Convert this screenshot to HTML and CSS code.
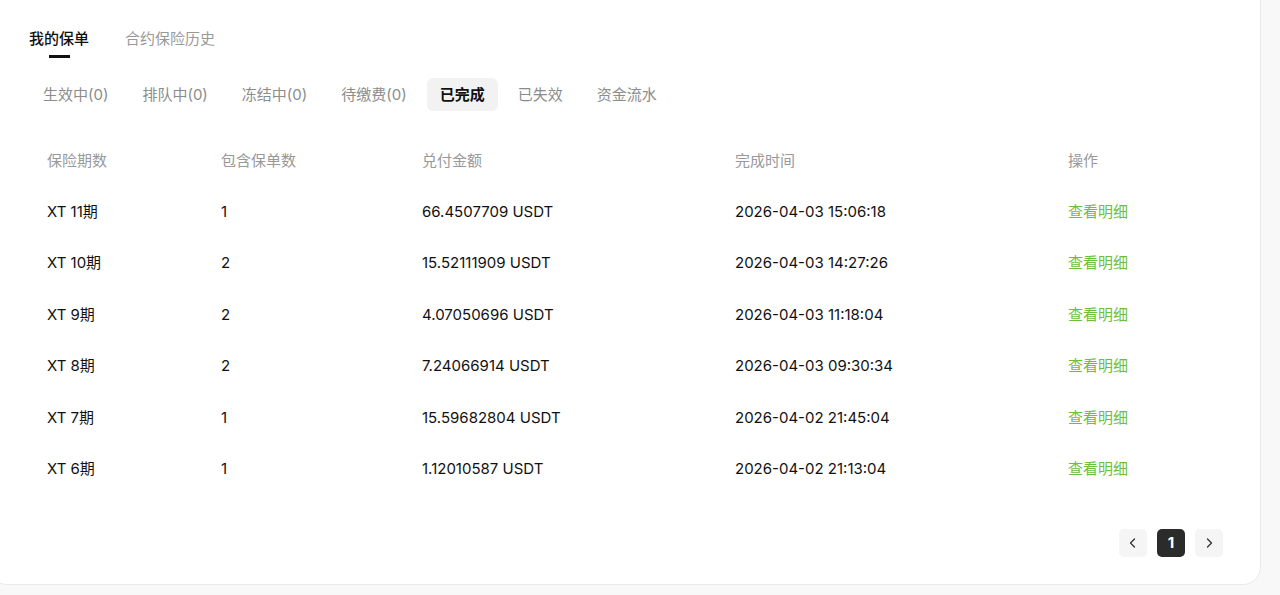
FILE: index.html
```html
<!DOCTYPE html>
<html lang="zh-CN">
<head>
    <meta charset="UTF-8">
    <title>我的保单</title>
    <link rel="stylesheet" href="styles.css">
</head>
<body>
    <div class="card">
        <div class="tabs">
            <div class="tab active">我的保单</div>
            <div class="tab">合约保险历史</div>
        </div>

        <div class="subtabs">
            <div class="subtab">生效中(0)</div>
            <div class="subtab">排队中(0)</div>
            <div class="subtab">冻结中(0)</div>
            <div class="subtab">待缴费(0)</div>
            <div class="subtab active">已完成</div>
            <div class="subtab">已失效</div>
            <div class="subtab">资金流水</div>
        </div>

        <div class="table">
            <div class="row head">
                <div>保险期数</div>
                <div>包含保单数</div>
                <div>兑付金额</div>
                <div>完成时间</div>
                <div>操作</div>
            </div>
            <div class="row">
                <div>XT 11期</div>
                <div>1</div>
                <div>66.4507709 USDT</div>
                <div>2026-04-03 15:06:18</div>
                <div><a class="link">查看明细</a></div>
            </div>
            <div class="row">
                <div>XT 10期</div>
                <div>2</div>
                <div>15.52111909 USDT</div>
                <div>2026-04-03 14:27:26</div>
                <div><a class="link">查看明细</a></div>
            </div>
            <div class="row">
                <div>XT 9期</div>
                <div>2</div>
                <div>4.07050696 USDT</div>
                <div>2026-04-03 11:18:04</div>
                <div><a class="link">查看明细</a></div>
            </div>
            <div class="row">
                <div>XT 8期</div>
                <div>2</div>
                <div>7.24066914 USDT</div>
                <div>2026-04-03 09:30:34</div>
                <div><a class="link">查看明细</a></div>
            </div>
            <div class="row">
                <div>XT 7期</div>
                <div>1</div>
                <div>15.59682804 USDT</div>
                <div>2026-04-02 21:45:04</div>
                <div><a class="link">查看明细</a></div>
            </div>
            <div class="row">
                <div>XT 6期</div>
                <div>1</div>
                <div>1.12010587 USDT</div>
                <div>2026-04-02 21:13:04</div>
                <div><a class="link">查看明细</a></div>
            </div>
        </div>

        <div class="pager">
            <div class="page-btn">
                <svg width="12" height="12" viewBox="0 0 12 12"><polyline points="7.5,2 3.5,6 7.5,10" fill="none" stroke="#333" stroke-width="1.3" stroke-linecap="round" stroke-linejoin="round"/></svg>
            </div>
            <div class="page-btn current">1</div>
            <div class="page-btn">
                <svg width="12" height="12" viewBox="0 0 12 12"><polyline points="4.5,2 8.5,6 4.5,10" fill="none" stroke="#333" stroke-width="1.3" stroke-linecap="round" stroke-linejoin="round"/></svg>
            </div>
        </div>
    </div>
</body>
</html>
```

FILE: styles.css
```css
body {
    margin: 0;
    background-color: #f8f8f8;
    font-family: Inter, "Noto Sans CJK SC", sans-serif;
    font-size: 15px;
    color: #111;
    overflow: hidden;
}
.card {
    width: 1231px;
    margin: -20px 0 0 -11px;
    padding: 47px 0 27px 39px;
    background-color: #fff;
    border: 1px solid #e9e9e9;
    border-radius: 18px;
}
.tabs {
    display: flex;
    gap: 36px;
}
.tab {
    line-height: 22px;
    color: #999;
    padding-bottom: 8px;
    position: relative;
}
.tab.active {
    color: #111;
    font-weight: 500;
}
.tab.active::after {
    content: "";
    position: absolute;
    left: 50%;
    bottom: 0;
    width: 21px;
    height: 3px;
    margin-left: -10px;
    background-color: #111;
}
.subtabs {
    display: flex;
    gap: 6px;
    margin-top: 20px;
}
.subtab {
    padding: 0 14px;
    height: 33px;
    line-height: 33px;
    color: #8c8c8c;
    border-radius: 6px;
}
.subtab.active {
    background-color: #f2f2f2;
    color: #111;
    font-weight: 600;
    padding: 0 13px;
}
.table {
    margin: 24px 0 0 18px;
}
.row {
    display: grid;
    grid-template-columns: 174px 201px 313px 333px 1fr;
    height: 51.4px;
    line-height: 22px;
    align-items: center;
}
.row.head {
    color: #999;
}
.link {
    color: #6cbf3c;
    cursor: pointer;
}
.pager {
    display: flex;
    justify-content: flex-end;
    gap: 10px;
    margin-top: 34px;
    padding-right: 37px;
}
.page-btn {
    width: 28px;
    height: 28px;
    border-radius: 5px;
    background-color: #f5f5f5;
    display: flex;
    align-items: center;
    justify-content: center;
}
.page-btn.current {
    background-color: #2b2b2b;
    color: #fff;
    font-weight: 700;
    font-size: 15px;
}
```
